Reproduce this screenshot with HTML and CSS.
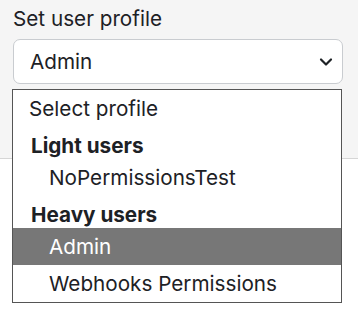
FILE: index.html
```html
<!DOCTYPE html>
<html lang="en">
<head>
    <meta charset="UTF-8">
    <meta name="viewport" content="width=device-width, initial-scale=1.0">
    <title>Set user profile</title>
    <link rel="stylesheet" href="styles.css">
</head>
<body>
    <div class="panel">
        <label class="field-label" for="profile">Set user profile</label>
        <div class="select-wrap">
            <div class="select-box" id="profile">
                <span>Admin</span>
                <svg class="chevron" width="14" height="10" viewBox="0 0 14 10">
                    <path d="M2 2.5 L7 7.5 L12 2.5" fill="none" stroke="#1d2125" stroke-width="2.2" stroke-linecap="round" stroke-linejoin="round"/>
                </svg>
            </div>

            <div class="dropdown">
                <div class="option">Select profile</div>
                <div class="group-label">Light users</div>
                <div class="option nested">NoPermissionsTest</div>
                <div class="group-label">Heavy users</div>
                <div class="option nested selected">Admin</div>
                <div class="option nested">Webhooks Permissions</div>
            </div>
        </div>
    </div>
</body>
</html>
```

FILE: styles.css
```css
html, body {
    min-height: 100vh;
}

body {
    font-family: 'Inter', 'Noto Sans', sans-serif;
    font-size: 20.7px;
    margin: 0;
    background: white;
    color: #1d2125;
}

.panel {
    background: #f5f5f5;
    border-bottom: 1px solid #d6d6d6;
    height: 159px;
    padding: 6px 16px 0 13px;
    box-sizing: border-box;
}

.field-label {
    display: block;
    line-height: 26px;
    margin-bottom: 7px;
}

.select-wrap {
    position: relative;
}

.select-box {
    display: flex;
    align-items: center;
    justify-content: space-between;
    height: 45px;
    box-sizing: border-box;
    width: 330px;
    padding: 0 9px 0 16px;
    background: white;
    border: 1px solid #c9ccd0;
    border-radius: 7px;
}

.dropdown {
    position: absolute;
    top: 50px;
    left: -1px;
    z-index: 10;
    width: 330px;
    box-sizing: border-box;
    background: white;
    border: 1px solid #555;
}

.option {
    height: 37px;
    line-height: 37px;
    padding-left: 16px;
}

.option.nested {
    padding-left: 36px;
}

.option.selected {
    background: #777;
    color: white;
}

.group-label {
    height: 32px;
    line-height: 37px;
    padding-left: 18px;
    font-weight: 700;
}
```
